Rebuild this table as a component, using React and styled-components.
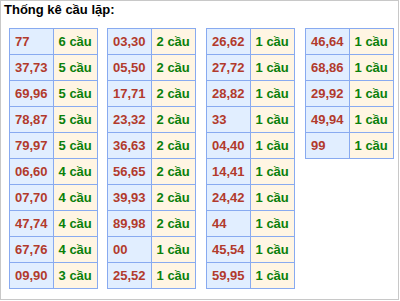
import React from "react";
import styled, { createGlobalStyle } from "styled-components";

const GlobalStyle = createGlobalStyle`
  html, body {
    margin: 0;
    padding: 0;
    background: #ffffff;
  }
  body {
    font-family: "Liberation Sans", Arial, sans-serif;
  }
`;

const Panel = styled.section`
  box-sizing: border-box;
  width: 399px;
  height: 300px;
  border: 1px solid #c8c8c8;
  padding: 1px 0 0 3px;
  background: #ffffff;
`;

const Title = styled.h3`
  margin: 0;
  font-size: 13px;
  line-height: 16px;
  font-weight: bold;
  color: #000000;
`;

const Columns = styled.div`
  display: grid;
  grid-template-columns: 98px 99px 99px auto;
  align-items: start;
  margin: 10px 0 0 5px;
`;

const Table = styled.div`
  display: inline-grid;
  grid-template-columns: auto auto;
  justify-self: start;
  border-top: 1px solid #88aaf0;
  border-left: 1px solid #88aaf0;
`;

const Cell = styled.div`
  box-sizing: border-box;
  height: 26px;
  padding: 0 5px;
  display: flex;
  align-items: center;
  border-right: 1px solid #88aaf0;
  border-bottom: 1px solid #88aaf0;
  font-size: 13px;
  font-weight: bold;
  white-space: nowrap;
  background: ${(p) => (p.$kind === "pair" ? "#e1eeff" : "#fff5e3")};
  color: ${(p) => (p.$kind === "pair" ? "#b23a2c" : "#0a800a")};
`;

const groups = [
  [
    ["77", 6],
    ["37,73", 5],
    ["69,96", 5],
    ["78,87", 5],
    ["79,97", 5],
    ["06,60", 4],
    ["07,70", 4],
    ["47,74", 4],
    ["67,76", 4],
    ["09,90", 3],
  ],
  [
    ["03,30", 2],
    ["05,50", 2],
    ["17,71", 2],
    ["23,32", 2],
    ["36,63", 2],
    ["56,65", 2],
    ["39,93", 2],
    ["89,98", 2],
    ["00", 1],
    ["25,52", 1],
  ],
  [
    ["26,62", 1],
    ["27,72", 1],
    ["28,82", 1],
    ["33", 1],
    ["04,40", 1],
    ["14,41", 1],
    ["24,42", 1],
    ["44", 1],
    ["45,54", 1],
    ["59,95", 1],
  ],
  [
    ["46,64", 1],
    ["68,86", 1],
    ["29,92", 1],
    ["49,94", 1],
    ["99", 1],
  ],
];

export default function App() {
  return (
    <>
      <GlobalStyle />
      <Panel>
        <Title>Thống kê cầu lặp:</Title>
        <Columns>
          {groups.map((rows, gi) => (
            <Table key={gi}>
              {rows.map(([pair, count]) => (
                <React.Fragment key={pair}>
                  <Cell $kind="pair">{pair}</Cell>
                  <Cell $kind="count">{count} cầu</Cell>
                </React.Fragment>
              ))}
            </Table>
          ))}
        </Columns>
      </Panel>
    </>
  );
}
